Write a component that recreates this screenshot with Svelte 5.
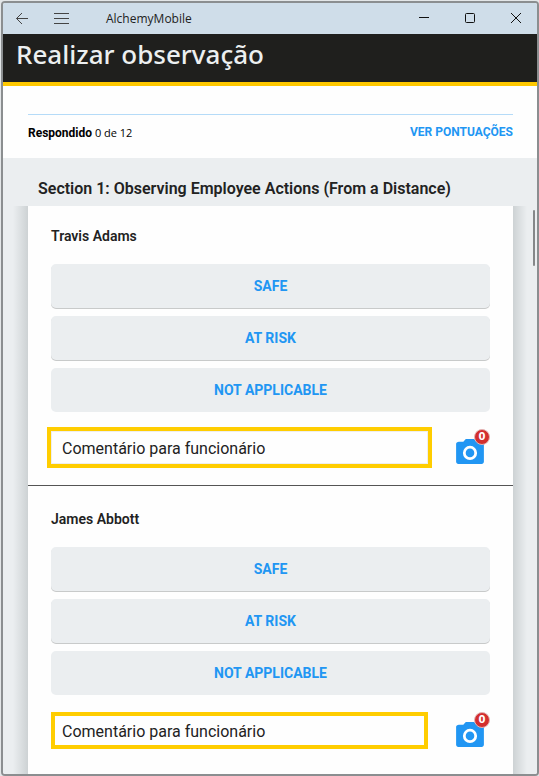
<script lang="ts">
	interface Person {
		name: string;
		comment: string;
		photos: number;
		answer: string | null;
	}

	const answers = ['SAFE', 'AT RISK', 'NOT APPLICABLE'];
	const total = 12;

	let people = $state<Person[]>([
		{ name: 'Travis Adams', comment: '', photos: 0, answer: null },
		{ name: 'James Abbott', comment: '', photos: 0, answer: null }
	]);

	const answered = $derived(people.filter((person) => person.answer !== null).length);
</script>

<div class="window">
	<div class="titlebar">
		<button class="nav-button" type="button" aria-label="Voltar">
			<svg width="14" height="14" viewBox="0 0 14 14">
				<path d="M13 6.5H1.5M7 1L1.5 6.5L7 12" />
			</svg>
		</button>
		<button class="nav-button" type="button" aria-label="Menu">
			<svg width="16" height="12" viewBox="0 0 16 12">
				<path d="M0 0.5H15M0 5.5H15M0 10.5H15" />
			</svg>
		</button>
		<span class="app-name">AlchemyMobile</span>
		<div class="window-controls">
			<button type="button" aria-label="Minimizar">
				<svg width="12" height="12" viewBox="0 0 12 12"><path d="M1 4.5H11" /></svg>
			</button>
			<button type="button" aria-label="Maximizar">
				<svg width="12" height="12" viewBox="0 0 12 12">
					<rect x="1.5" y="0.5" width="9" height="9" rx="1" />
				</svg>
			</button>
			<button type="button" aria-label="Fechar">
				<svg width="12" height="12" viewBox="0 0 12 12"><path d="M1 0L11 10M11 0L1 10" /></svg>
			</button>
		</div>
	</div>

	<header>
		<h1>Realizar observação</h1>
	</header>

	<div class="summary">
		<div class="summary-row">
			<p><strong>Respondido</strong> {answered} de {total}</p>
			<a href="#scores">VER PONTUAÇÕES</a>
		</div>
	</div>

	<main>
		<h2>Section 1: Observing Employee Actions (From a Distance)</h2>

		<div class="card-area">
			<div class="card">
				{#each people as person, i}
					<section class="person">
						<h3>{person.name}</h3>
						<div class="answers">
							{#each answers as answer}
								<button type="button" onclick={() => (person.answer = answer)}>{answer}</button>
							{/each}
						</div>
						<div class="comment-row">
							<input
								class:active={i === 0}
								type="text"
								placeholder="Comentário para funcionário"
								aria-label="Comentário para funcionário"
								bind:value={person.comment}
							/>
							<button class="camera" type="button" aria-label="Adicionar foto">
								<svg width="28" height="25" viewBox="2 2 20 18">
									<path
										d="M9 2L7.17 4H4c-1.1 0-2 .7-2 1.6v12.8c0 .9.7 1.6 1.6 1.6h16.8c.9 0 1.6-.7 1.6-1.6V5.6C22 4.7 21.1 4 20 4h-3.17L15 2z"
									/>
									<circle cx="12" cy="12" r="4.1" />
								</svg>
								<span class="badge">{person.photos}</span>
							</button>
						</div>
					</section>
				{/each}
			</div>
		</div>
		<div class="scroll-thumb"></div>
	</main>
</div>

<style>
	:global(body) {
		background: #e3e6e8;
	}

	.window {
		box-sizing: border-box;
		display: flex;
		flex-direction: column;
		min-height: calc(100vh - 1px);
		margin: 1px 0 0 1px;
		border: 2px solid #8b8e90;
		border-radius: 4px;
		overflow: hidden;
		background: #fefefe;
		font-family: Roboto, 'Liberation Sans', sans-serif;
		color: #222;
	}

	h1,
	h2,
	h3,
	p {
		margin: 0;
	}

	button {
		padding: 0;
		border: 0;
		background: none;
		font-family: inherit;
		cursor: pointer;
	}

	.titlebar {
		display: flex;
		align-items: center;
		gap: 2px;
		height: 31px;
		background: #cfdde9;
	}

	.titlebar button {
		display: flex;
		align-items: center;
		justify-content: center;
		height: 30px;
	}

	.titlebar svg {
		fill: none;
		stroke: #111;
		stroke-width: 1;
	}

	.titlebar .nav-button {
		width: 38px;
	}

	.titlebar .nav-button svg {
		stroke: #444;
	}

	.app-name {
		flex: 1;
		margin-left: 23px;
		font-family: 'Open Sans', 'Noto Sans', sans-serif;
		font-size: 12px;
	}

	.window-controls {
		display: flex;
		gap: 4px;
	}

	.window-controls button {
		width: 42px;
	}

	header {
		height: 48px;
		padding: 0 13px;
		border-bottom: 4px solid #ffc800;
		background: #1f1f1d;
	}

	h1 {
		font-family: 'Noto Sans', 'Open Sans', sans-serif;
		font-size: 26px;
		font-weight: 500;
		line-height: 40px;
		color: #eceff0;
	}

	.summary {
		padding: 28px 24px 15px 25px;
	}

	.summary-row {
		display: flex;
		justify-content: space-between;
		border-top: 1px solid #b5dbf8;
		padding-top: 8px;
		font-size: 12px;
		line-height: 19px;
	}

	.summary p {
		font-family: 'Open Sans', 'Noto Sans', sans-serif;
		font-size: 11px;
		color: #000;
	}

	.summary strong {
		font-family: Roboto, sans-serif;
		font-size: 12px;
	}

	.summary a {
		font-weight: 700;
		color: #2196f3;
		text-decoration: none;
	}

	main {
		position: relative;
		flex: 1;
		display: flex;
		flex-direction: column;
		background: #ebeef0;
	}

	h2 {
		padding: 21px 35px 7px;
		font-size: 16px;
		font-weight: 600;
		line-height: 20px;
	}

	.card-area {
		flex: 1;
		display: flex;
		padding: 0 24px 0 25px;
		background:
			linear-gradient(to right, #ebeef000 10px, #cdd2d4 25px) left / 25px 100% no-repeat,
			linear-gradient(to left, #ebeef000 10px, #cdd2d4 24px) right / 24px 100% no-repeat;
	}

	.card {
		flex: 1;
		background: #fefefe;
	}

	.person {
		padding: 20px 23px 19px;
	}

	.person + .person {
		padding-top: 23px;
		border-top: 1px solid #555;
	}

	h3 {
		font-size: 14px;
		font-weight: 600;
		line-height: 20px;
	}

	.answers {
		display: flex;
		flex-direction: column;
		gap: 8px;
		margin: 18px 0 17px;
	}

	.answers button {
		height: 44px;
		border-radius: 5px;
		background: #ebeef0;
		box-shadow: 0 1px 0 #c8caca;
		font-size: 14px;
		font-weight: 700;
		color: #2196f3;
	}

	.answers button:last-child {
		box-shadow: none;
	}

	.comment-row {
		display: flex;
		align-items: center;
		gap: 28px;
		height: 37px;
		padding-right: 6px;
	}

	input {
		box-sizing: border-box;
		flex: 1;
		min-width: 0;
		height: 37px;
		padding: 2px 7px 0;
		border: 4px solid #ffcd00;
		background: #fefefe;
		font-family: inherit;
		font-size: 16px;
		color: #222;
	}

	input.active {
		height: 33px;
		padding: 2px 10px 0;
		border: 1px solid #eee;
		outline: 4px solid #ffcd00;
	}

	input::placeholder {
		color: #222;
		opacity: 1;
	}

	.camera {
		position: relative;
		align-self: flex-end;
		padding-bottom: 2px;
	}

	.camera svg {
		display: block;
		fill: #2196f3;
	}

	.camera circle {
		fill: none;
		stroke: #fff;
		stroke-width: 2;
	}

	.badge {
		position: absolute;
		top: -10px;
		right: -6px;
		width: 14px;
		height: 14px;
		border: 1px solid #e3b5b5;
		border-radius: 50%;
		background: #d32f2f;
		font-family: 'DejaVu Sans', sans-serif;
		font-size: 10px;
		font-weight: 700;
		line-height: 14px;
		text-align: center;
		color: #fff;
	}

	.scroll-thumb {
		position: absolute;
		top: 52px;
		right: 2px;
		width: 2px;
		height: 56px;
		border-radius: 1px;
		background: #858789;
	}
</style>
